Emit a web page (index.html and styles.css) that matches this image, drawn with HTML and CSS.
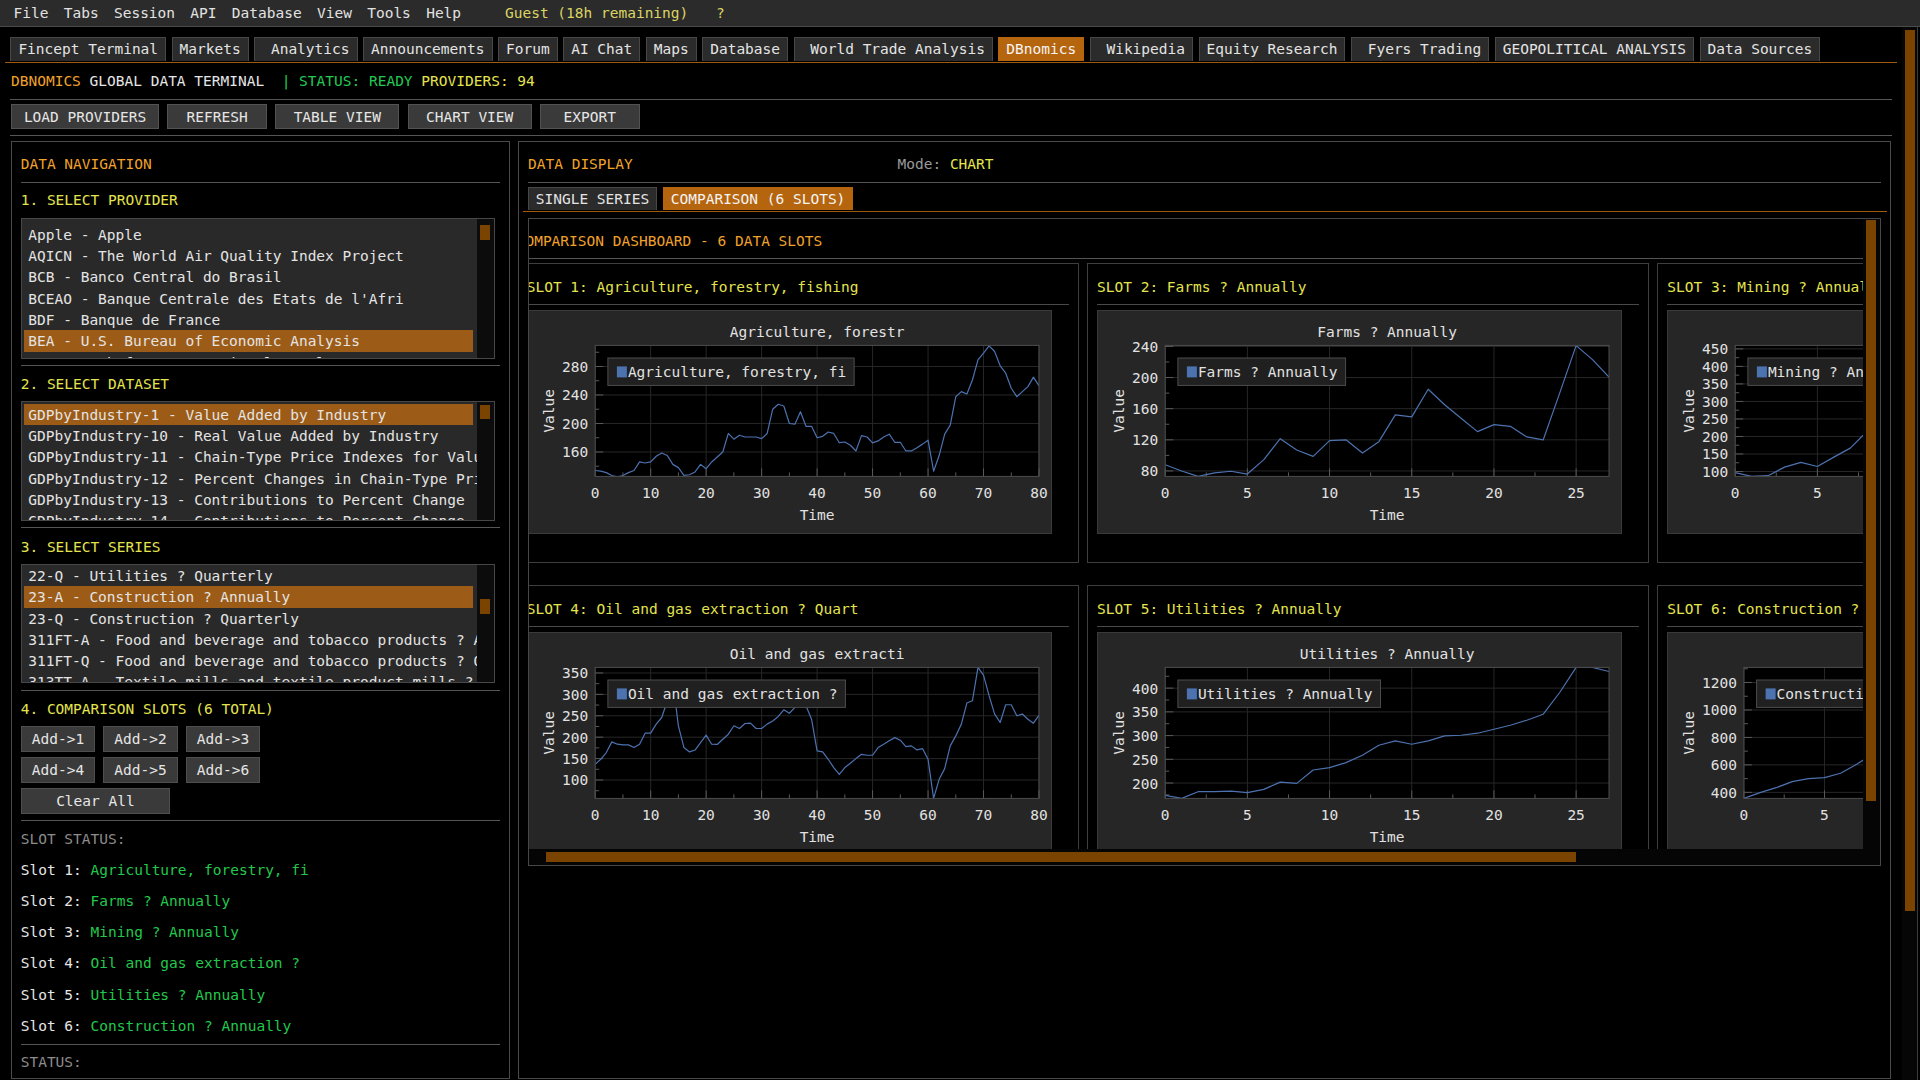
FILE: index.html
```html
<!DOCTYPE html>
<html lang="en">
<head>
<meta charset="utf-8">
<title>Fincept Terminal - DBnomics</title>
<link rel="stylesheet" href="styles.css">
</head>
<body>
<div class="menubar">
  <span>File</span><span>Tabs</span><span>Session</span><span>API</span><span>Database</span><span>View</span><span>Tools</span><span>Help</span>
  <span class="guest">Guest (18h remaining)</span><span class="guest-q">?</span>
</div>
<div class="main">
  <div class="content">
    <div class="tabbar">
      <div class="tab">Fincept Terminal</div>
      <div class="tab">Markets</div>
      <div class="tab"> Analytics</div>
      <div class="tab">Announcements</div>
      <div class="tab">Forum</div>
      <div class="tab">AI Chat</div>
      <div class="tab">Maps</div>
      <div class="tab">Database</div>
      <div class="tab"> World Trade Analysis</div>
      <div class="tab active">DBnomics</div>
      <div class="tab"> Wikipedia</div>
      <div class="tab">Equity Research</div>
      <div class="tab"> Fyers Trading</div>
      <div class="tab">GEOPOLITICAL ANALYSIS</div>
      <div class="tab">Data Sources</div>
    </div>
    <div class="statusline"><span class="c-orange">DBNOMICS</span><span class="c-white"> GLOBAL DATA TERMINAL  </span><span class="c-green">| STATUS: READY</span><span class="c-yellow"> PROVIDERS: 94</span></div>
    <div class="sep sep-a"></div>
    <div class="toolbar">
      <div class="btn w-lg">LOAD PROVIDERS</div>
      <div class="btn w-sm">REFRESH</div>
      <div class="btn w-md">TABLE VIEW</div>
      <div class="btn w-md">CHART VIEW</div>
      <div class="btn w-sm">EXPORT</div>
    </div>
    <div class="sep sep-b"></div>
    <div class="panels">
      <div class="panel left">
        <div class="ph c-orange">DATA NAVIGATION</div>
        <div class="psep psep-top"></div>
        <div class="lh lh-1">1. SELECT PROVIDER</div>
        <div class="listbox lb-1">
          <div class="lb-items">
            <div class="lb-row">Apple - Apple</div>
            <div class="lb-row">AQICN - The World Air Quality Index Project</div>
            <div class="lb-row">BCB - Banco Central do Brasil</div>
            <div class="lb-row">BCEAO - Banque Centrale des Etats de l'Afri</div>
            <div class="lb-row">BDF - Banque de France</div>
            <div class="lb-row sel">BEA - U.S. Bureau of Economic Analysis</div>
            <div class="lb-row">BIS - Bank for International Settlements</div>
          </div>
          <div class="lb-track"><div class="lb-thumb th-1"></div></div>
        </div>
        <div class="psep psep-l1"></div>
        <div class="lh lh-2">2. SELECT DATASET</div>
        <div class="listbox lb-2">
          <div class="lb-items">
            <div class="lb-row sel">GDPbyIndustry-1 - Value Added by Industry</div>
            <div class="lb-row">GDPbyIndustry-10 - Real Value Added by Industry</div>
            <div class="lb-row">GDPbyIndustry-11 - Chain-Type Price Indexes for Value Added by Industry</div>
            <div class="lb-row">GDPbyIndustry-12 - Percent Changes in Chain-Type Price Indexes</div>
            <div class="lb-row">GDPbyIndustry-13 - Contributions to Percent Change</div>
            <div class="lb-row">GDPbyIndustry-14 - Contributions to Percent Change</div>
          </div>
          <div class="lb-track"><div class="lb-thumb th-2"></div></div>
        </div>
        <div class="psep psep-l2"></div>
        <div class="lh lh-3">3. SELECT SERIES</div>
        <div class="listbox lb-3">
          <div class="lb-items">
            <div class="lb-row">22-Q - Utilities ? Quarterly</div>
            <div class="lb-row sel">23-A - Construction ? Annually</div>
            <div class="lb-row">23-Q - Construction ? Quarterly</div>
            <div class="lb-row">311FT-A - Food and beverage and tobacco products ? Annually</div>
            <div class="lb-row">311FT-Q - Food and beverage and tobacco products ? Quarterly</div>
            <div class="lb-row">313TT-A - Textile mills and textile product mills ? Annually</div>
          </div>
          <div class="lb-track"><div class="lb-thumb th-3"></div></div>
        </div>
        <div class="psep psep-l3"></div>
        <div class="lh lh-4">4. COMPARISON SLOTS (6 TOTAL)</div>
        <div class="slotbtns">
          <div class="sbtn">Add-&gt;1</div>
          <div class="sbtn">Add-&gt;2</div>
          <div class="sbtn">Add-&gt;3</div>
          <div class="sbtn">Add-&gt;4</div>
          <div class="sbtn">Add-&gt;5</div>
          <div class="sbtn">Add-&gt;6</div>
          <div class="sbtn clear">Clear All</div>
        </div>
        <div class="psep psep-btn"></div>
        <div class="ss-label">SLOT STATUS:</div>
        <div class="ss-list">
          <div class="ss-row">Slot 1: <span class="c-green2">Agriculture, forestry, fi</span></div>
          <div class="ss-row">Slot 2: <span class="c-green2">Farms ? Annually</span></div>
          <div class="ss-row">Slot 3: <span class="c-green2">Mining ? Annually</span></div>
          <div class="ss-row">Slot 4: <span class="c-green2">Oil and gas extraction ?</span></div>
          <div class="ss-row">Slot 5: <span class="c-green2">Utilities ? Annually</span></div>
          <div class="ss-row">Slot 6: <span class="c-green2">Construction ? Annually</span></div>
        </div>
        <div class="psep psep-ss"></div>
        <div class="ss-label st-label">STATUS:</div>
      </div>
      <div class="panel right">
        <div class="dd-head">
          <span class="dd-title c-orange">DATA DISPLAY</span>
          <span class="mode">Mode: <span class="c-yellow">CHART</span></span>
        </div>
        <div class="psep psep-top"></div>
        <div class="subtabs">
          <div class="tab subtab">SINGLE SERIES</div>
          <div class="tab subtab active">COMPARISON (6 SLOTS)</div>
        </div>
        <div class="child">
          <div class="child-top">
            <div class="viewport">
              <div class="dash">
                <div class="dash-title c-orange">COMPARISON DASHBOARD - 6 DATA SLOTS</div>
                <div class="dash-sep"></div>
                <div class="slots">
                  <div class="slot">
                    <div class="slot-title">SLOT 1: Agriculture, forestry, fishing</div>
                    <div class="slot-sep"></div>
                    <div class="chart" data-chart="0"></div>
                  </div>
                  <div class="slot">
                    <div class="slot-title">SLOT 2: Farms ? Annually</div>
                    <div class="slot-sep"></div>
                    <div class="chart" data-chart="1"></div>
                  </div>
                  <div class="slot">
                    <div class="slot-title">SLOT 3: Mining ? Annually</div>
                    <div class="slot-sep"></div>
                    <div class="chart" data-chart="2"></div>
                  </div>
                  <div class="slot">
                    <div class="slot-title">SLOT 4: Oil and gas extraction ? Quart</div>
                    <div class="slot-sep"></div>
                    <div class="chart" data-chart="3"></div>
                  </div>
                  <div class="slot">
                    <div class="slot-title">SLOT 5: Utilities ? Annually</div>
                    <div class="slot-sep"></div>
                    <div class="chart" data-chart="4"></div>
                  </div>
                  <div class="slot">
                    <div class="slot-title">SLOT 6: Construction ? Annually</div>
                    <div class="slot-sep"></div>
                    <div class="chart" data-chart="5"></div>
                  </div>
                </div>
              </div>
            </div>
            <div class="vtrack"><div class="vthumb"></div></div>
          </div>
          <div class="htrack"><div class="hthumb"></div></div>
        </div>
      </div>
    </div>
  </div>
  <div class="mvtrack"><div class="mvthumb"></div></div>
</div>
<script src="script.js"></script>
</body>
</html>
```

FILE: styles.css
```css
* { box-sizing: border-box; margin: 0; padding: 0; }
html, body { width: 1920px; height: 1080px; overflow: hidden; background: #000; }
body {
  font-family: "DejaVu Sans Mono", "Liberation Mono", monospace;
  font-size: 14.5px;
  line-height: 17px;
  color: #e6e6e6;
}
.c-orange { color: #f0a22a; }
.c-white { color: #e6e6e6; }
.c-green { color: #22c955; }
.c-green2 { color: #22c84c; }
.c-yellow { color: #e4e44e; }

/* menu bar */
.menubar {
  height: 27px;
  background: #2b2b2b;
  border-bottom: 1px solid #4a4a4a;
  display: flex;
  gap: 15.3px;
  padding-left: 13.5px;
  line-height: 26px;
  color: #e2e2e2;
  white-space: pre;
}
.menubar .guest { color: #dcd462; margin-left: 28.6px; }
.menubar .guest-q { color: #dcd462; margin-left: 12.4px; }

.main { display: flex; height: 1053px; }
.content { width: 1892px; padding-left: 10px; display: flex; flex-direction: column; }

/* tabs */
.tabbar {
  display: flex;
  gap: 5.5px;
  margin: 10px -5px 0 -5px;
  padding-left: 5.4px;
  border-bottom: 1.5px solid #a05a10;
  height: 25.5px;
}
.tab {
  height: 24px;
  padding: 0 7px;
  line-height: 23.5px;
  background: #2b2b2b;
  border: 1px solid #474747;
  border-bottom: none;
  white-space: pre;
  color: #e4e4e4;
}
.tab.active { background: #b6650f; border-color: #b6650f; color: #f4f4f4; }

.statusline { margin-top: 10px; height: 17px; white-space: pre; padding-left: 1px; }
.sep { height: 1px; background: #555; }
.sep-a { margin-top: 9.5px; }
.sep-b { margin-top: 6px; }

.toolbar { display: flex; gap: 8.4px; margin-top: 4px; margin-left: 1px; }
.btn {
  height: 25px;
  background: #3a3a3a;
  border: 1px solid #525252;
  text-align: center;
  line-height: 24px;
  white-space: pre;
}
.w-lg { width: 148px; }
.w-md { width: 124px; }
.w-sm { width: 99.5px; }

/* panels */
.panels { display: flex; gap: 8.5px; margin-top: 5px; margin-left: 1px; height: 938px; }
.panel { border: 1px solid #4a4a4a; height: 100%; display: flex; flex-direction: column; }
.left { width: 498.5px; padding: 0 8.5px 0 8.7px; }
.right { width: 1373px; padding: 0 9px; }

.ph { margin-top: 13.5px; height: 17px; white-space: pre; }
.psep { height: 1px; background: #555; flex: none; }
.psep-top { margin-top: 9px; }
.psep-l1 { margin-top: 6.4px; }
.psep-l2 { margin-top: 6px; }
.psep-l3 { margin-top: 6.8px; }
.psep-btn { margin-top: 6.5px; }
.psep-ss { margin-top: 2.6px; }

.lh { color: #e4e44e; height: 17px; line-height: 18.5px; white-space: pre; flex: none; }
.lh-1 { margin-top: 8.5px; }
.lh-2 { margin-top: 8.8px; }
.lh-3 { margin-top: 9.7px; }
.lh-4 { margin-top: 8.4px; }

.listbox {
  width: 474px;
  border: 1px solid #474747;
  background: #292929;
  display: flex;
  overflow: hidden;
  flex: none;
}
.lb-1 { height: 141px; margin-top: 9.8px; }
.lb-2 { height: 120px; margin-top: 9.2px; }
.lb-3 { height: 119.9px; margin-top: 8.7px; }
.lb-items { flex: 1; overflow: hidden; padding-left: 2.3px; }
.lb-1 .lb-items { padding-top: 5.05px; }
.lb-2 .lb-items { padding-top: 1.65px; }
.lb-3 .lb-items { padding-top: 0.4px; }
.lb-row {
  height: 21.3px;
  line-height: 23.3px;
  padding-left: 4.3px;
  margin-right: 3.4px;
  white-space: pre;
  color: #e4e4e4;
}
.lb-row.sel { background: #9c5b16; }
.lb-track { width: 17px; background: #0c0c0c; flex: none; }
.lb-thumb { width: 10px; margin-left: 3.3px; height: 14.7px; background: #7a4300; }
.th-1 { margin-top: 6.7px; }
.th-2 { margin-top: 2.6px; }
.th-3 { margin-top: 34.5px; height: 15.1px; }

.slotbtns {
  display: grid;
  grid-template-columns: repeat(3, 74.5px);
  column-gap: 8px;
  row-gap: 5.5px;
  margin-top: 9.4px;
}
.sbtn {
  height: 25.5px;
  background: #3a3a3a;
  border: 1px solid #4e4e4e;
  text-align: center;
  line-height: 24.5px;
  white-space: pre;
}
.sbtn.clear { grid-column: 1 / span 3; width: 149.5px; }

.ss-label { color: #8c8c8c; margin-top: 8.8px; height: 17px; line-height: 18px; white-space: pre; flex: none; }
.st-label { margin-top: 8.4px; }
.ss-list { margin-top: 6.9px; }
.ss-row { height: 31.26px; line-height: 33px; white-space: pre; }

/* right panel */
.dd-head { display: flex; margin-top: 13.5px; height: 17px; white-space: pre; }
.dd-title { width: 369.5px; }
.mode { color: #9a9a9a; }

.subtabs {
  display: flex;
  gap: 6px;
  margin: 4.7px -5.5px 0 -5.5px;
  padding-left: 5.5px;
  border-bottom: 1.5px solid #a05a10;
  height: 24.8px;
  flex: none;
}
.subtab { height: 23.3px; line-height: 22.8px; padding: 0 6.75px; }

.child {
  margin-top: 5.8px;
  width: 1353px;
  height: 648.4px;
  border: 1px solid #474747;
  display: flex;
  flex-direction: column;
  flex: none;
}
.child-top { display: flex; height: 630px; }
.viewport { width: 1333.5px; height: 630px; overflow: hidden; }
.vtrack { width: 17.5px; background: #050505; }
.vthumb { margin: 1.7px 0 0 3.5px; width: 10px; height: 581px; background: #7a4300; }
.htrack { height: 16.4px; background: #050505; }
.hthumb { margin: 3px 0 0 17px; width: 1029.6px; height: 10px; background: #7a4300; }

.dash { margin-left: -12.3px; width: 1703px; }
.dash-title { margin-top: 13.2px; height: 17px; line-height: 18px; white-space: pre; }
.dash-sep { margin-top: 9.2px; height: 1px; background: #555; }
.slots {
  margin-top: 4.3px;
  display: grid;
  grid-template-columns: repeat(3, 562.3px);
  column-gap: 8px;
  row-gap: 22.7px;
}
.slot { height: 299.3px; border: 1px solid #3e3e3e; padding: 0 9px; overflow: hidden; }
.slot-title { margin-top: 14px; height: 17px; line-height: 18.5px; color: #e4e44e; white-space: pre; }
.slot-sep { margin-top: 9px; height: 1px; background: #4a4a4a; }
.chart { margin-top: 4.3px; width: 525px; height: 224px; }
.chart svg { display: block; }

.plot text {
  font-family: "DejaVu Sans Mono", "Liberation Mono", monospace;
  font-size: 14.5px;
  fill: #e2e2e2;
  dominant-baseline: central;
  white-space: pre;
}
.plot .ttl, .plot .xl, .plot .ax { text-anchor: middle; }
.plot .yl { text-anchor: end; }
.plot .frame { fill: #262626; stroke: #3a3a3a; }
.plot .area { fill: #000; }
.plot .grid { stroke: #272727; fill: none; }
.plot .tick { stroke: #5a5a5a; fill: none; }
.plot .line { fill: none; stroke: #4c72b0; stroke-width: 1.2; stroke-linejoin: round; }
.plot .border { fill: none; stroke: #4d4d4d; }
.plot .leg { fill: #202020; stroke: #4d4d4d; }
.plot .sw { fill: #4c72b0; }

/* main scrollbar */
.mvtrack { width: 16px; margin-left: 10px; background: #060606; border-right: 1px solid #3a3a3a; }
.mvthumb { margin: 3px 0 0 3.3px; width: 9.7px; height: 880.7px; background: #7a4300; }
```

FILE: script.js
```js
(function () {
  var CW = 8.73;
  var charts = [
    { title: 'Agriculture, forestr', legend: 'Agriculture, forestry, fi', xmax: 80, xs: 10, ymin: 125.7, ymax: 309.6, y0: 160, ys: 40,
      data: [134,133,131,127,125,127,131,134,146,144.5,
             146,154,158.6,155,142.6,138,127,128,132,142.6,
             136.5,146,153,160,186,178,183.5,181,181,181,
             178.8,186,220,227,224.5,200,199,216.5,196,196,
             180,182,188,186,173,174,169.4,161.4,183,181,
             172.7,175.5,181,185,173.6,173.6,161.4,161.4,166,171,
             176.5,133,155,185,197.6,237.6,244.7,241.4,261,289.4,
             298.8,309,301,281,270.6,249.4,237.6,244.7,251.8,265,
             252.7] },
    { title: 'Farms ? Annually', legend: 'Farms ? Annually', xmax: 27, xs: 5, ymin: 73, ymax: 241.3, y0: 80, ys: 40,
      data: [88,80,73,77.5,79.6,76,94.5,121.5,107,98.8,119,120,103,117.6,152,149.4,185,165,147.6,130.5,139.5,137.3,123.7,120,180,241,223,200.7] },
    { title: 'Mining ? Annually', legend: 'Mining ? Annually', xmax: 27, xs: 5, ymin: 86, ymax: 460, y0: 100, ys: 50,
      data: [97,86,88,112.4,126,114.3,141,166.7,214,230,250,240,265,290,300,285,310,330,320,345,360,370,385,400,420,460,440,430] },
    { title: 'Oil and gas extracti', legend: 'Oil and gas extraction ?', xmax: 80, xs: 10, ymin: 57, ymax: 363, y0: 100, ys: 50,
      data: [136.7,148.4,164,189,183.6,182,182,175.8,183.6,209.4,
             209.4,230.5,246,285,330,226.5,175.8,165.6,170,187.5,
             204.7,183.6,183,195.3,207,226.6,220.3,232,232.8,220.3,
             220.3,230.5,238,248.4,264,256,269.5,290,273.4,242,
             168,165.6,148.4,129,113.3,129,139,150,160,157.8,
             157.8,175.8,183.6,191.4,199,193,178,179.7,170.3,173.4,
             148.4,57,101.6,126.6,179.7,203,230.5,279.7,285,363,
             345,297,254,234.4,275.8,275.8,250,254,242,232.8,
             251.6] },
    { title: 'Utilities ? Annually', legend: 'Utilities ? Annually', xmax: 27, xs: 5, ymin: 167.6, ymax: 443.7, y0: 200, ys: 50,
      data: [174,167.6,181.7,181.7,183,179.6,186.6,202,199.3,227.5,232.4,243,258.5,279.6,288.7,281.7,288.7,299.3,300.7,305,313.4,321.8,332.4,345,390.8,443.7,443.7,435] },
    { title: 'Construction ? Annua', legend: 'Construction ? Annually', xmax: 27, xs: 5, ymin: 356, ymax: 1310, y0: 400, ys: 200,
      data: [356,398,434,478,500,507,539,605,680,720,700,760,800,830,860,840,900,950,980,1000,1040,1080,1100,1150,1200,1250,1310,1290] }
  ];

  function n(v) { return Math.round(v * 100) / 100; }

  function build(c, id) {
    var W = 525, H = 224, pt = 35.4, pb = 166.4, pr = 512;
    var yt = [], xt = [], i;
    for (i = 0; c.y0 + i * c.ys <= c.ymax + 1e-6; i++) yt.push(c.y0 + i * c.ys);
    for (i = 0; i * c.xs <= c.xmax + 1e-6; i++) xt.push(i * c.xs);
    var lw = 0;
    yt.forEach(function (t) { lw = Math.max(lw, String(t).length * CW); });
    var pl = 35 + lw + 7;
    var pw = pr - pl, ph = pb - pt;
    function X(x) { return pl + x / c.xmax * pw; }
    function Y(v) { return pt + (c.ymax - v) / (c.ymax - c.ymin) * ph; }
    var o = [];
    o.push('<svg class="plot" xmlns="http://www.w3.org/2000/svg" width="' + W + '" height="' + H + '" viewBox="0 0 ' + W + ' ' + H + '">');
    o.push('<defs><clipPath id="cp' + id + '"><rect x="' + n(pl) + '" y="' + pt + '" width="' + n(pw) + '" height="' + ph + '"/></clipPath></defs>');
    o.push('<rect class="frame" x="0.5" y="0.5" width="' + (W - 1) + '" height="' + (H - 1) + '"/>');
    o.push('<text class="ttl" x="' + n(pl + pw / 2) + '" y="22">' + c.title + '</text>');
    o.push('<rect class="area" x="' + n(pl) + '" y="' + pt + '" width="' + n(pw) + '" height="' + ph + '"/>');
    var g = '';
    xt.forEach(function (x) { g += 'M' + n(X(x)) + ' ' + pt + 'V' + pb; });
    yt.forEach(function (t) { g += 'M' + n(pl) + ' ' + n(Y(t)) + 'H' + pr; });
    o.push('<path class="grid" d="' + g + '"/>');
    var tk = '';
    for (i = 0; i * c.xs / 2 <= c.xmax + 1e-6; i++) {
      tk += 'M' + n(X(i * c.xs / 2)) + ' ' + pb + 'v' + (i % 2 ? -4 : -8);
    }
    var half = c.ys / 2;
    var start = c.y0 - Math.floor((c.y0 - c.ymin) / half) * half;
    for (i = 0; start + i * half <= c.ymax + 1e-6; i++) {
      var v = start + i * half;
      var q = (v - c.y0) / c.ys;
      var major = Math.abs(q - Math.round(q)) < 1e-6;
      tk += 'M' + n(pl) + ' ' + n(Y(v)) + 'h' + (major ? 8 : 4);
    }
    o.push('<path class="tick" d="' + tk + '"/>');
    var pts = c.data.map(function (val, k) { return n(X(k)) + ',' + n(Y(val)); }).join(' ');
    o.push('<polyline class="line" clip-path="url(#cp' + id + ')" points="' + pts + '"/>');
    o.push('<rect class="border" x="' + n(pl) + '" y="' + pt + '" width="' + n(pw) + '" height="' + ph + '"/>');
    var lx = pl + 12.7, ly = pt + 12.6, lwid = c.legend.length * CW + 28;
    o.push('<rect class="leg" x="' + n(lx) + '" y="' + n(ly) + '" width="' + n(lwid) + '" height="27.4"/>');
    o.push('<rect class="sw" x="' + n(lx + 9) + '" y="' + n(ly + 8.4) + '" width="10" height="11"/>');
    o.push('<text class="lt" x="' + n(lx + 20) + '" y="' + n(ly + 14.2) + '">' + c.legend + '</text>');
    yt.forEach(function (t) { o.push('<text class="yl" x="' + n(pl - 7) + '" y="' + n(Y(t) + 0.5) + '">' + t + '</text>'); });
    xt.forEach(function (x) { o.push('<text class="xl" x="' + n(X(x)) + '" y="183">' + x + '</text>'); });
    o.push('<text class="ax" x="' + n(pl + pw / 2) + '" y="205.3">Time</text>');
    o.push('<text class="ax" transform="translate(22 ' + n((pt + pb) / 2) + ') rotate(-90)">Value</text>');
    o.push('</svg>');
    return o.join('');
  }

  var els = document.querySelectorAll('.chart');
  for (var k = 0; k < els.length; k++) {
    var idx = +els[k].getAttribute('data-chart');
    els[k].innerHTML = build(charts[idx], idx);
  }
})();
```
